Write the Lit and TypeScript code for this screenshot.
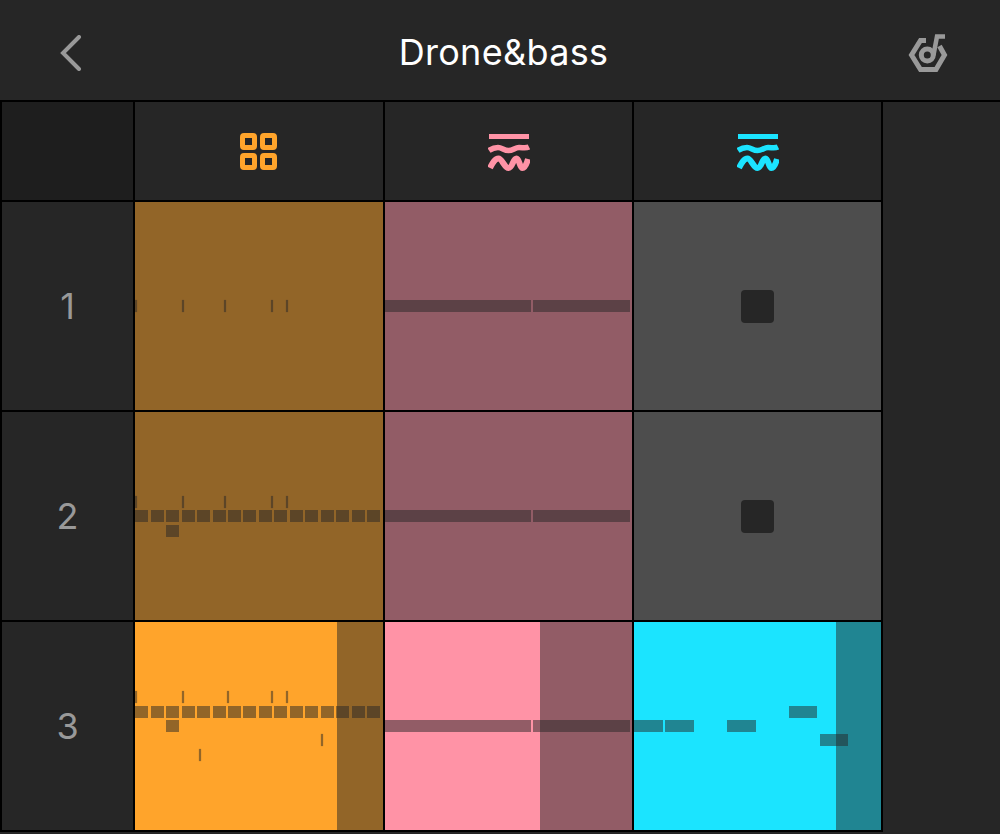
import { LitElement, html, css, svg } from "lit";
import { classMap } from "lit/directives/class-map.js";
import { customElement } from "lit/decorators.js";

type Note = [number, number, number, number];

// note coordinates are cell relative, the piano roll is a free canvas
const STEP_XS = [0, 16, 31, 47, 62, 78, 93, 108, 124, 139, 155, 170, 186, 201, 217, 232];
const ticks = (xs: number[], y: number): Note[] => xs.map((x) => [x, y, 2, 12]);
const steps = (y: number): Note[] => STEP_XS.map((x) => [x, y, 13, 12]);

const DRUM_TICKS = [0, 47, 89, 136, 151];
const BASS: Note[] = [[0, 98, 146, 12], [148, 98, 97, 12]];

const ROWS = [
  {
    label: "1",
    cells: [
      { color: "#ffa42b", played: 0, notes: ticks(DRUM_TICKS, 98) },
      { color: "#ff93a6", played: 0, notes: BASS },
      null,
    ],
  },
  {
    label: "2",
    cells: [
      {
        color: "#ffa42b",
        played: 0,
        notes: [...ticks(DRUM_TICKS, 84), ...steps(98), [31, 113, 13, 12]] as Note[],
      },
      { color: "#ff93a6", played: 0, notes: BASS },
      null,
    ],
  },
  {
    label: "3",
    cells: [
      {
        color: "#ffa42b",
        played: 202,
        notes: [
          ...ticks([0, 47, 92, 136, 151], 69),
          ...steps(84),
          [31, 98, 13, 12],
          [186, 112, 2, 12],
          [64, 127, 2, 12],
        ] as Note[],
      },
      { color: "#ff93a6", played: 155, notes: BASS },
      {
        color: "#1be4ff",
        played: 202,
        notes: [
          [0, 98, 29, 12],
          [31, 98, 29, 12],
          [93, 98, 29, 12],
          [155, 84, 28, 12],
          [186, 112, 28, 12],
        ] as Note[],
      },
    ],
  },
];

const backIcon = svg`<svg class="back" width="24" height="36" viewBox="0 0 24 36" fill="none">
  <path d="M20 2 L4 18 L20 34" stroke="#999" stroke-width="4" stroke-linecap="round"/>
</svg>`;

const songIcon = svg`<svg class="song" width="40" height="40" viewBox="0 0 40 40" fill="none" stroke="#999">
  <path d="M18 7.500 H12.500 L3.500 22 L12.500 36.500 H28 L36.500 22 L31.500 13" stroke-width="5"/>
  <circle cx="19.300" cy="22" r="6" stroke-width="5"/>
  <path d="M25.500 22 L29 3.500 H37" stroke-width="4.500"/>
</svg>`;

const gridIcon = svg`<svg width="38" height="38" viewBox="0 0 38 38" fill="none" stroke="#ffa42b" stroke-width="5">
  <rect x="2.500" y="3.500" width="12" height="12" rx="1.500"/>
  <rect x="22.500" y="3.500" width="12" height="12" rx="1.500"/>
  <rect x="2.500" y="23.500" width="12" height="12" rx="1.500"/>
  <rect x="22.500" y="23.500" width="12" height="12" rx="1.500"/>
</svg>`;

const waveIcon = (color: string) => svg`<svg width="42" height="40" viewBox="0 0 42 40" fill="none" stroke=${color}>
  <path d="M1 5.500 H41" stroke-width="5"/>
  <path d="M1 19.500 C4 17.500 7 16.500 10 16.500 C14 16.500 16 19.500 20.500 19.500 C25 19.500 27 16.500 31 16.500 C35 16.500 38 17.500 41 16" stroke-width="5.500"/>
  <path d="M2 37 C4.500 32 7 27.500 10.500 27.500 C14 27.500 16.500 37 20.500 37 C24.500 37 25 27.500 28.500 27.500 C31.500 27.500 31.500 37 34.500 37 C37 37 39 32 40 28" stroke-width="6"/>
</svg>`;

@customElement("app-root")
export class AppRoot extends LitElement {
  static styles = css`
    :host {
      display: block;
      height: 834px;
      overflow: hidden;
      background: #262626;
      font-family: Inter, "Liberation Sans", sans-serif;
    }
    .top {
      display: grid;
      grid-template-columns: 1fr auto 1fr;
      align-items: center;
      height: 100px;
      padding: 0 52px 0 59px;
      border-bottom: 2px solid #000;
    }
    .top svg {
      display: block;
      margin-top: 6px;
    }
    .song {
      justify-self: end;
    }
    .title {
      color: #fff;
      font-size: 36px;
      line-height: 1;
      letter-spacing: 0.3px;
      margin-top: 3px;
    }
    .board {
      display: grid;
      width: 881px;
      grid-template-columns: 131px 248px 247px 247px;
      grid-template-rows: 98px repeat(3, 208px);
      gap: 2px;
      padding: 0 0 2px 2px;
      background: #000;
    }
    .corner {
      background: #1e1e1e;
    }
    .head {
      display: flex;
      align-items: center;
      justify-content: center;
      background: #262626;
    }
    .head svg {
      display: block;
    }
    .label {
      display: flex;
      align-items: center;
      justify-content: center;
      background: #262626;
      color: #999;
      font-size: 36px;
    }
    .cell {
      position: relative;
      overflow: hidden;
    }
    .cell.empty {
      display: flex;
      align-items: center;
      justify-content: center;
      background: #4d4d4d;
    }
    .stop {
      width: 33px;
      height: 33px;
      border-radius: 4px;
      background: #262626;
    }
    .note,
    .shade {
      position: absolute;
      background: rgba(38, 38, 38, 0.5);
    }
    .note.tick {
      box-shadow: 0 0 1px rgba(38, 38, 38, 0.6);
    }
    .shade {
      top: 0;
      bottom: 0;
      right: 0;
    }
  `;

  renderCell(cell: { color: string; played: number; notes: Note[] } | null) {
    if (!cell) {
      return html`<div class="cell empty"><div class="stop"></div></div>`;
    }
    return html`
      <div class="cell" style="background:${cell.color}">
        ${cell.notes.map(
          ([x, y, w, h]) =>
            html`<div
              class=${classMap({ note: true, tick: w === 2 })}
              style="left:${x}px;top:${y}px;width:${w}px;height:${h}px"
            ></div>`
        )}
        <div class="shade" style="left:${cell.played}px"></div>
      </div>
    `;
  }

  render() {
    return html`
      <div class="top">
        ${backIcon}
        <div class="title">Drone&amp;bass</div>
        ${songIcon}
      </div>
      <div class="board">
        <div class="corner"></div>
        <div class="head">${gridIcon}</div>
        <div class="head">${waveIcon("#ff93a6")}</div>
        <div class="head">${waveIcon("#1be4ff")}</div>
        ${ROWS.map(
          (row) => html`
            <div class="label">${row.label}</div>
            ${row.cells.map((cell) => this.renderCell(cell))}
          `
        )}
      </div>
    `;
  }
}
